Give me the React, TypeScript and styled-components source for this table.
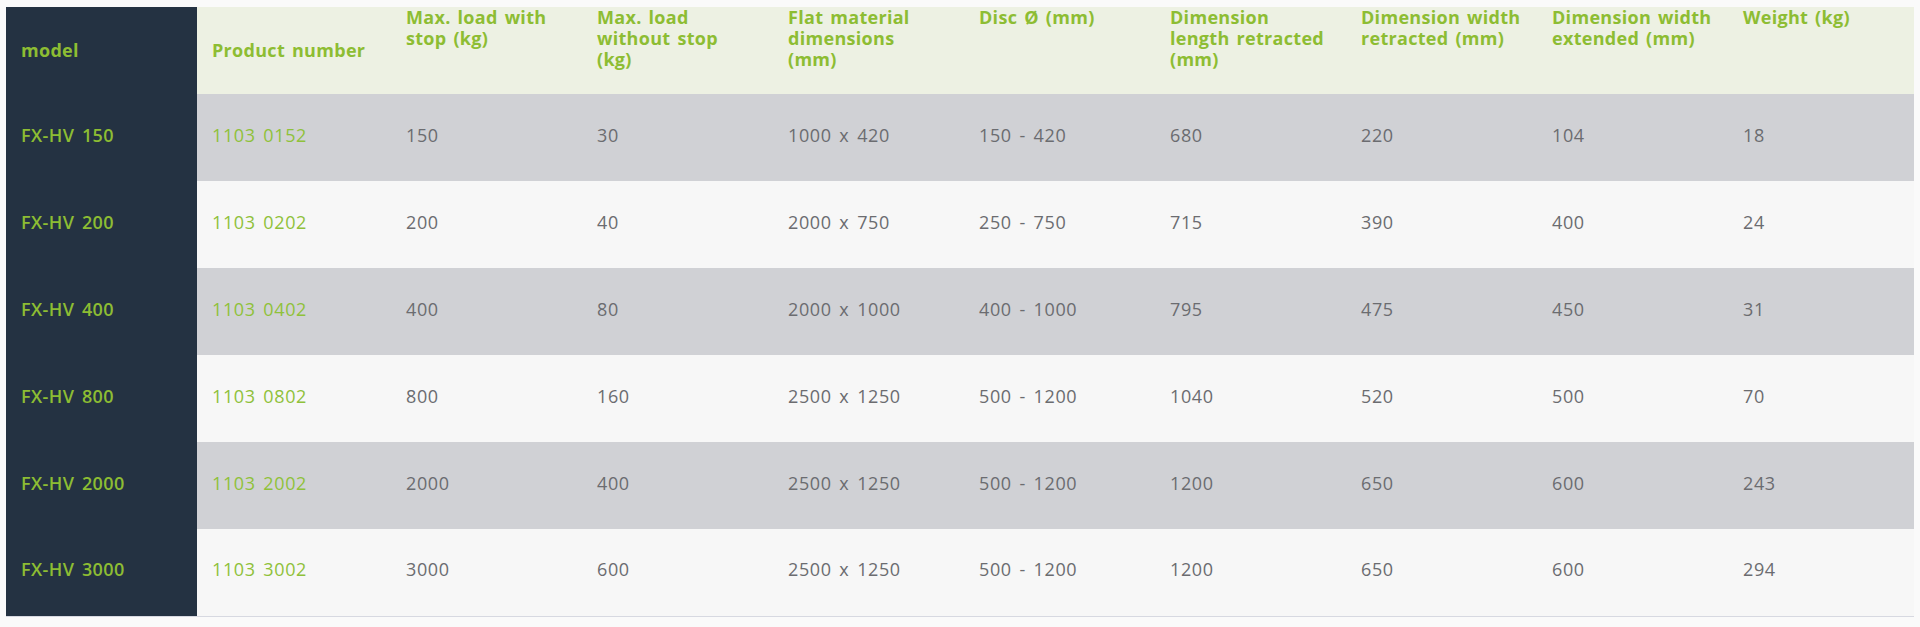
import React from "react";
import styled, { createGlobalStyle } from "styled-components";

const Global = createGlobalStyle`
  html, body { margin: 0; padding: 0; background: #fafafa; }
  body { font-family: "Open Sans", "Liberation Sans", sans-serif; }
`;

const Page = styled.div`
  padding: 7px 6px 0 6px;
`;

const Table = styled.table`
  width: 1908px;
  table-layout: fixed;
  border-collapse: collapse;
  border-bottom: 1px solid #d7d9e1;
`;

const Col = styled.col<{ $w: number }>`
  width: ${(p) => p.$w}px;
`;

const HeadRow = styled.tr`
  height: 87px;
  background: #edf1e3;
`;

const Row = styled.tr<{ $shade: boolean }>`
  height: 87px;
  background: ${(p) => (p.$shade ? "#d0d1d5" : "#f7f7f7")};
`;

const Th = styled.th<{ $middle?: boolean }>`
  padding: 0 10px 0 15px;
  text-align: left;
  vertical-align: ${(p) => (p.$middle ? "middle" : "top")};
  font-size: 18px;
  line-height: 21px;
  font-weight: 700;
  letter-spacing: 0.3px;
  word-spacing: 2px;
  white-space: nowrap;
  color: #8dbd33;
`;

const ModelTh = styled(Th)`
  background: #243242;
`;

const Cell = styled.td`
  padding: 0 10px 6px 15px;
  font-size: 18px;
  letter-spacing: 0.6px;
  word-spacing: 2.5px;
  white-space: nowrap;
  vertical-align: middle;
`;

const ModelCell = styled(Cell)`
  background: #243242;
  font-weight: 600;
  letter-spacing: 0.4px;
  color: #8dbd33;
`;

const NumberCell = styled(Cell)`
  font-weight: 500;
  color: #8fc13a;
`;

const ValueCell = styled(Cell)`
  font-weight: 500;
  color: #6b6c70;
`;

const headers: string[][] = [
  ["Max. load with", "stop (kg)"],
  ["Max. load", "without stop", "(kg)"],
  ["Flat material", "dimensions", "(mm)"],
  ["Disc Ø (mm)"],
  ["Dimension", "length retracted", "(mm)"],
  ["Dimension width", "retracted (mm)"],
  ["Dimension width", "extended (mm)"],
  ["Weight (kg)"],
];

const widths = [191, 194, 191, 191, 191, 191, 191, 191, 191, 186];

const rows: [string, string, string[]][] = [
  ["FX-HV 150", "1103 0152", ["150", "30", "1000 x 420", "150 - 420", "680", "220", "104", "18"]],
  ["FX-HV 200", "1103 0202", ["200", "40", "2000 x 750", "250 - 750", "715", "390", "400", "24"]],
  ["FX-HV 400", "1103 0402", ["400", "80", "2000 x 1000", "400 - 1000", "795", "475", "450", "31"]],
  ["FX-HV 800", "1103 0802", ["800", "160", "2500 x 1250", "500 - 1200", "1040", "520", "500", "70"]],
  ["FX-HV 2000", "1103 2002", ["2000", "400", "2500 x 1250", "500 - 1200", "1200", "650", "600", "243"]],
  ["FX-HV 3000", "1103 3002", ["3000", "600", "2500 x 1250", "500 - 1200", "1200", "650", "600", "294"]],
];

export default function App() {
  return (
    <>
      <Global />
      <Page>
        <Table>
          <colgroup>
            {widths.map((w, i) => (
              <Col key={i} $w={w} />
            ))}
          </colgroup>
          <thead>
            <HeadRow>
              <ModelTh $middle>model</ModelTh>
              <Th $middle>Product number</Th>
              {headers.map((lines, i) => (
                <Th key={i}>
                  {lines.map((l, k) => (
                    <React.Fragment key={k}>
                      {k > 0 && <br />}
                      {l}
                    </React.Fragment>
                  ))}
                </Th>
              ))}
            </HeadRow>
          </thead>
          <tbody>
            {rows.map(([model, num, vals], i) => (
              <Row key={model} $shade={i % 2 === 0}>
                <ModelCell>{model}</ModelCell>
                <NumberCell>{num}</NumberCell>
                {vals.map((v, j) => (
                  <ValueCell key={j}>{v}</ValueCell>
                ))}
              </Row>
            ))}
          </tbody>
        </Table>
      </Page>
    </>
  );
}
